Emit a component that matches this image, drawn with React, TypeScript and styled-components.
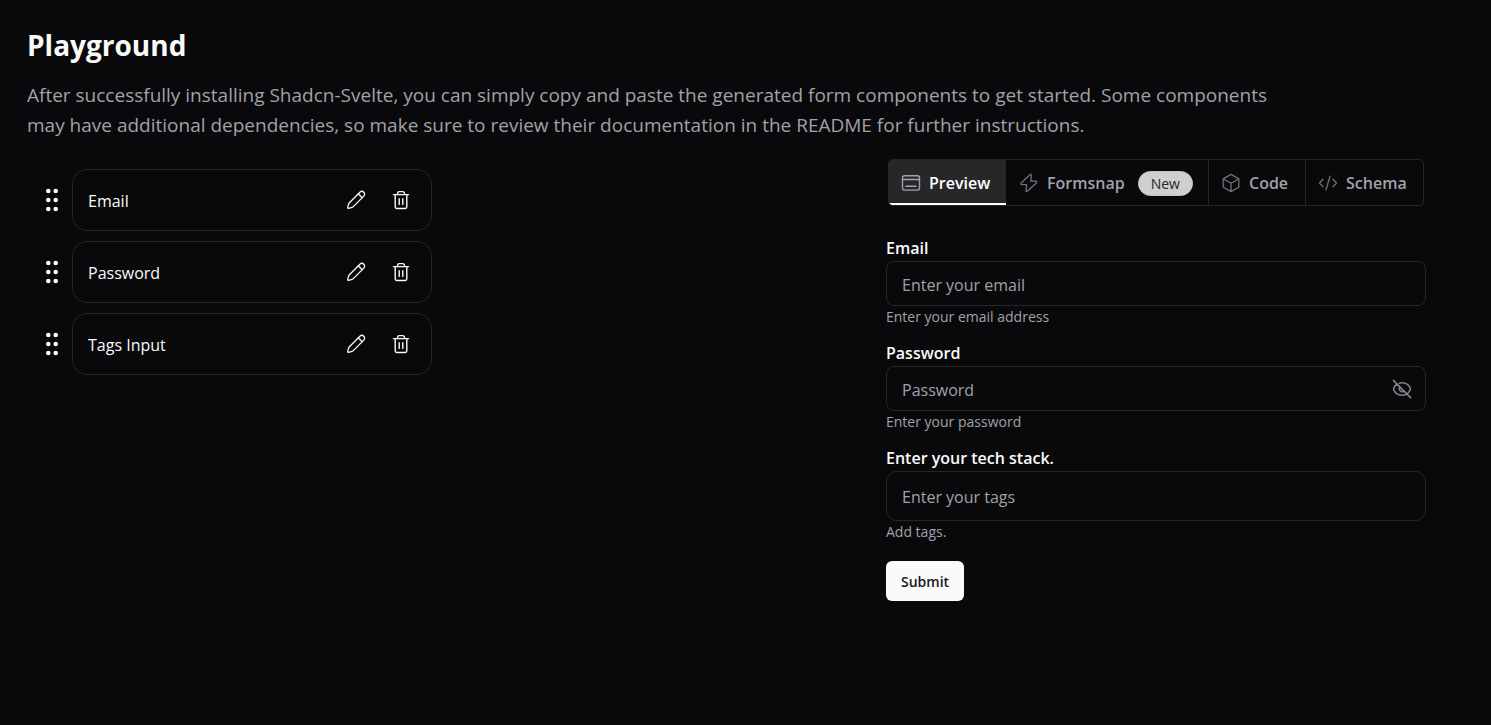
import React from "react";
import styled, { createGlobalStyle } from "styled-components";

const GlobalStyle = createGlobalStyle`
  *, *::before, *::after { box-sizing: border-box; }
  body {
    margin: 0;
    background: #09090b;
    color: #fafafa;
    font-family: "Segoe UI", "Open Sans", "Noto Sans", sans-serif;
  }
  button, input { font-family: inherit; }
`;

const Page = styled.main`
  min-height: 100vh;
  padding: 24px 65px 24px 27px;
`;

const Title = styled.h1`
  margin: 0 0 14px;
  font-size: 28px;
  line-height: 42px;
  font-weight: 700;
`;

const Intro = styled.p`
  margin: 0;
  max-width: 1256px;
  font-size: 19px;
  line-height: 30px;
  color: #a1a1aa;
`;

const Workspace = styled.div`
  display: grid;
  grid-template-columns: minmax(0, 1fr) minmax(0, 540px);
  gap: 24px;
  margin-top: 19px;
`;

const FieldList = styled.ul`
  display: flex;
  flex-direction: column;
  gap: 10px;
  margin: 0;
  padding: 10px 0 0 15px;
  list-style: none;
`;

const FieldItem = styled.li`
  display: flex;
  align-items: center;
  gap: 10px;
`;

const IconButton = styled.button`
  display: flex;
  padding: 0;
  border: 0;
  background: none;
  color: #fafafa;
  cursor: pointer;
`;

const FieldCard = styled.div`
  display: flex;
  align-items: center;
  gap: 25px;
  width: 100%;
  max-width: 360px;
  height: 62px;
  padding: 0 20px 0 15px;
  border: 1px solid #27272a;
  border-radius: 15px;
`;

const FieldName = styled.span`
  flex: 1;
  padding-top: 2px;
  font-size: 16px;
  line-height: 24px;
`;

const TabBar = styled.div`
  display: grid;
  grid-template-columns: 117fr 202fr 97fr 118fr;
  height: 47px;
  margin: 0 2px 29px;
  border: 1px solid #27272a;
  border-radius: 5px;
  overflow: hidden;
`;

const Tab = styled.button<{ $active?: boolean; $divided?: boolean }>`
  display: flex;
  align-items: center;
  gap: 8px;
  min-width: 0;
  padding: 1px 0 0 ${(p) => (p.$divided || p.$active ? 12 : 13)}px;
  border: 0;
  border-left: ${(p) => (p.$divided ? "1px solid #27272a" : "0")};
  background: ${(p) => (p.$active ? "#27272a" : "transparent")};
  box-shadow: ${(p) => (p.$active ? "inset 0 -2px #ffffff" : "none")};
  color: ${(p) => (p.$active ? "#ffffff" : "#a1a1aa")};
  font-size: 16px;
  line-height: 24px;
  font-weight: 600;
  white-space: nowrap;
  cursor: pointer;

  svg {
    flex: none;
    color: ${(p) => (p.$active ? "#a1a1aa" : "#707076")};
  }
`;

const Badge = styled.span`
  margin-left: 5px;
  padding: 0 12px;
  border: 1px solid #b4d0bd;
  border-radius: 13px;
  background: #cfcfcf;
  color: #27272a;
  font-size: 14px;
  line-height: 23px;
  font-weight: 500;
`;

const Form = styled.form`
  display: flex;
  flex-direction: column;
  align-items: flex-start;
`;

const FormField = styled.div`
  display: flex;
  flex-direction: column;
  width: 100%;
  margin-bottom: 12px;
`;

const Label = styled.label`
  font-size: 16px;
  line-height: 26px;
  font-weight: 600;
  color: #fafafa;
`;

const InputBox = styled.div<{ $tall?: boolean }>`
  display: flex;
  align-items: center;
  height: ${(p) => (p.$tall ? 50 : 45)}px;
  padding: 0 13px 0 15px;
  border: 1px solid #27272a;
  border-radius: ${(p) => (p.$tall ? 10 : 8)}px;
`;

const TextInput = styled.input`
  flex: 1;
  min-width: 0;
  height: 100%;
  padding: 2px 0 0;
  border: 0;
  outline: 0;
  background: none;
  color: #fafafa;
  font-size: 16px;

  &::placeholder { color: #a1a1aa; opacity: 1; }
`;

const RevealButton = styled(IconButton)`
  color: #85858c;
`;

const Hint = styled.p`
  margin: 0;
  font-size: 14px;
  line-height: 22px;
  color: #a1a1aa;
`;

const Submit = styled.button`
  height: 40px;
  margin-top: 6px;
  padding: 0 15px;
  border: 0;
  border-radius: 6px;
  background: #fafafa;
  color: #18181b;
  font-size: 14px;
  font-weight: 600;
  cursor: pointer;
`;

const stroke = {
  fill: "none",
  stroke: "currentColor",
  strokeLinecap: "round" as const,
  strokeLinejoin: "round" as const,
  "aria-hidden": true,
};

const GripIcon = () => (
  <svg width="20" height="24" viewBox="0 0 20 24" fill="currentColor" aria-hidden>
    {[3, 12, 21].map((y) => (
      <React.Fragment key={y}>
        <circle cx="6.3" cy={y} r="2.3" />
        <circle cx="13.7" cy={y} r="2.3" />
      </React.Fragment>
    ))}
  </svg>
);

const PencilIcon = () => (
  <svg width="20" height="20" viewBox="0 0 20 20" strokeWidth="1.3" {...stroke}>
    <path d="M13.9 2.2a2.75 2.75 0 0 1 3.9 3.9L7.3 16.6q-.5.5-1.2.7l-3.7 1q-.9.1-.7-.8l1-3.6q.2-.7.7-1.2Z" />
    <path d="M12.3 3.8l3.9 3.9" />
  </svg>
);

const TrashIcon = () => (
  <svg width="20" height="20" viewBox="0 0 20 20" strokeWidth="1.4" {...stroke}>
    <path d="M2.5 4.6h15M6.6 4.4V3.2q0-1.6 1.6-1.6h3.6q1.6 0 1.6 1.6v1.2M4.2 4.8v12q0 1.7 1.7 1.7h8.2q1.7 0 1.7-1.7v-12M8.2 8.8v5.6M11.8 8.8v5.6" />
  </svg>
);

const WindowIcon = () => (
  <svg width="20" height="20" viewBox="0 0 20 20" strokeWidth="1.4" {...stroke}>
    <rect x="1.5" y="2.7" width="17" height="14.4" rx="2" />
    <path d="M1.5 6.5h17M5 13.2h10" />
  </svg>
);

const BoltIcon = () => (
  <svg width="20" height="20" viewBox="0 0 20 20" strokeWidth="1.3" {...stroke}>
    <path d="M11.3 1.5 2 10q-.6 1.4.8 1.6h4.8L7 18q.2.9 1 .6l9.6-8.8q.6-1.4-.8-1.6h-5L12.3 2q-.2-.9-1-.5Z" />
  </svg>
);

const CubeIcon = () => (
  <svg width="20" height="20" viewBox="0 0 20 20" strokeWidth="1.3" {...stroke}>
    <path d="M10 1.4l7.8 4.5v8.4L10 18.6l-7.8-4.3V5.9ZM2.4 6 10 10.2 17.6 6M10 10.2v8.2" />
  </svg>
);

const CodeIcon = () => (
  <svg width="20" height="20" viewBox="0 0 20 20" strokeWidth="1.3" {...stroke}>
    <path d="M5 6.3 1.5 10 5 13.7M15 6.3l3.5 3.7-3.5 3.7M12 3.2 8 16.8" />
  </svg>
);

const EyeOffIcon = () => (
  <svg width="20" height="20" viewBox="0 0 20 20" strokeWidth="1.5" {...stroke}>
    <path d="M1.4 1.4l17.2 17.2M7.3 4.2Q8.6 3.8 10 3.8c4.5 0 7.4 2.6 8.5 6.2q-.8 2.4-2.5 4M4.8 5.2Q2.4 6.8 1.5 10c1.1 3.6 4 6.2 8.5 6.2q2.2 0 4-.8M7.9 7.9a3 3 0 0 0 4.2 4.2" />
  </svg>
);

const fields = ["Email", "Password", "Tags Input"];

export default function App() {
  return (
    <>
      <GlobalStyle />
      <Page>
        <Title>Playground</Title>
        <Intro>
          After successfully installing Shadcn-Svelte, you can simply copy and paste the generated
          form components to get started. Some components may have additional dependencies, so make
          sure to review their documentation in the README for further instructions.
        </Intro>
        <Workspace>
          <FieldList>
            {fields.map((name) => (
              <FieldItem key={name}>
                <IconButton type="button" aria-label={`Reorder ${name}`}>
                  <GripIcon />
                </IconButton>
                <FieldCard>
                  <FieldName>{name}</FieldName>
                  <IconButton type="button" aria-label={`Edit ${name}`}>
                    <PencilIcon />
                  </IconButton>
                  <IconButton type="button" aria-label={`Delete ${name}`}>
                    <TrashIcon />
                  </IconButton>
                </FieldCard>
              </FieldItem>
            ))}
          </FieldList>
          <section>
            <TabBar role="tablist">
              <Tab type="button" role="tab" aria-selected $active>
                <WindowIcon />
                Preview
              </Tab>
              <Tab type="button" role="tab">
                <BoltIcon />
                Formsnap
                <Badge>New</Badge>
              </Tab>
              <Tab type="button" role="tab" $divided>
                <CubeIcon />
                Code
              </Tab>
              <Tab type="button" role="tab" $divided>
                <CodeIcon />
                Schema
              </Tab>
            </TabBar>
            <Form onSubmit={(e) => e.preventDefault()}>
              <FormField>
                <Label htmlFor="email">Email</Label>
                <InputBox>
                  <TextInput id="email" type="email" placeholder="Enter your email" />
                </InputBox>
                <Hint>Enter your email address</Hint>
              </FormField>
              <FormField>
                <Label htmlFor="password">Password</Label>
                <InputBox>
                  <TextInput id="password" type="password" placeholder="Password" />
                  <RevealButton type="button" aria-label="Show password">
                    <EyeOffIcon />
                  </RevealButton>
                </InputBox>
                <Hint>Enter your password</Hint>
              </FormField>
              <FormField>
                <Label htmlFor="tags">Enter your tech stack.</Label>
                <InputBox $tall>
                  <TextInput id="tags" type="text" placeholder="Enter your tags" />
                </InputBox>
                <Hint>Add tags.</Hint>
              </FormField>
              <Submit type="submit">Submit</Submit>
            </Form>
          </section>
        </Workspace>
      </Page>
    </>
  );
}
